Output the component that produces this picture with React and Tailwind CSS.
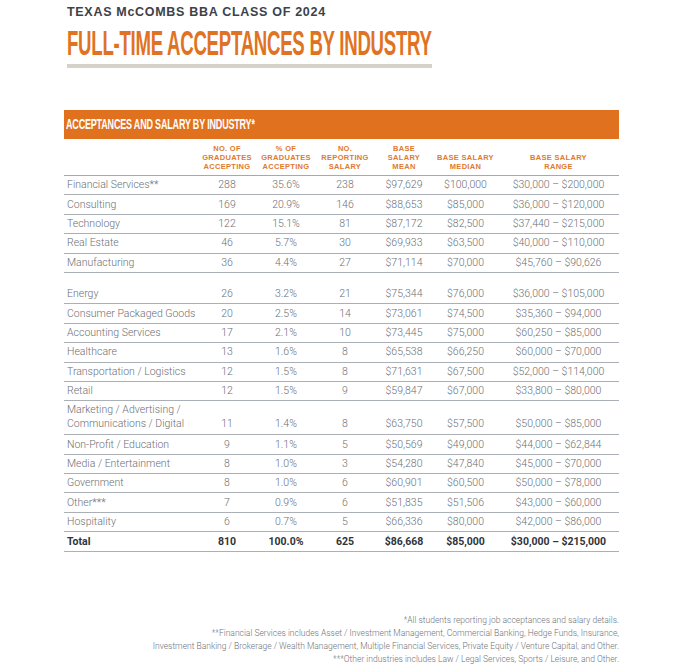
import React from 'react';

const groupOne = [
  ['Financial Services**', '288', '35.6%', '238', '$97,629', '$100,000', '$30,000 – $200,000'],
  ['Consulting', '169', '20.9%', '146', '$88,653', '$85,000', '$36,000 – $120,000'],
  ['Technology', '122', '15.1%', '81', '$87,172', '$82,500', '$37,440 – $215,000'],
  ['Real Estate', '46', '5.7%', '30', '$69,933', '$63,500', '$40,000 – $110,000'],
  ['Manufacturing', '36', '4.4%', '27', '$71,114', '$70,000', '$45,760 – $90,626'],
];

const groupTwo = [
  ['Energy', '26', '3.2%', '21', '$75,344', '$76,000', '$36,000 – $105,000'],
  ['Consumer Packaged Goods', '20', '2.5%', '14', '$73,061', '$74,500', '$35,360 – $94,000'],
  ['Accounting Services', '17', '2.1%', '10', '$73,445', '$75,000', '$60,250 – $85,000'],
  ['Healthcare', '13', '1.6%', '8', '$65,538', '$66,250', '$60,000 – $70,000'],
  ['Transportation / Logistics', '12', '1.5%', '8', '$71,631', '$67,500', '$52,000 – $114,000'],
  ['Retail', '12', '1.5%', '9', '$59,847', '$67,000', '$33,800 – $80,000'],
];

const marketing = ['11', '1.4%', '8', '$63,750', '$57,500', '$50,000 – $85,000'];

const groupThree = [
  ['Non-Profit / Education', '9', '1.1%', '5', '$50,569', '$49,000', '$44,000 – $62,844'],
  ['Media / Entertainment', '8', '1.0%', '3', '$54,280', '$47,840', '$45,000 – $70,000'],
  ['Government', '8', '1.0%', '6', '$60,901', '$60,500', '$50,000 – $78,000'],
  ['Other***', '7', '0.9%', '6', '$51,835', '$51,506', '$43,000 – $60,000'],
  ['Hospitality', '6', '0.7%', '5', '$66,336', '$80,000', '$42,000 – $86,000'],
];

const total = ['Total', '810', '100.0%', '625', '$86,668', '$85,000', '$30,000 – $215,000'];

const headers = [
  ['NO. OF', 'GRADUATES', 'ACCEPTING'],
  ['% OF', 'GRADUATES', 'ACCEPTING'],
  ['NO.', 'REPORTING', 'SALARY'],
  ['BASE', 'SALARY', 'MEAN'],
  ['BASE SALARY', 'MEDIAN'],
  ['BASE SALARY', 'RANGE'],
];

const cols = 'grid grid-cols-[133px_60px_58px_60px_58px_65px_1fr]';

const Row = ({ row, bold }) => (
  <div
    className={`${cols} h-[19.4px] items-center border-b border-[#aab0b6] ${
      bold ? 'font-bold text-[#2f343a]' : 'font-light text-[#6c7076]'
    }`}
  >
    <div className="pl-[3px] whitespace-nowrap">{row[0]}</div>
    {row.slice(1).map((v, i) => (
      <div key={i} className="text-center whitespace-nowrap">{v}</div>
    ))}
  </div>
);

export default function App() {
  return (
    <div className="w-[681px] h-[668px] bg-white overflow-hidden font-['Roboto',sans-serif]">
      <div className="ml-[64px] w-[555px] pt-[5px]">
        <div className="pl-[3px] h-[15px] leading-[15px] text-[12.5px] font-bold tracking-[0.7px] text-[#3c4248] font-['Liberation_Sans',sans-serif] whitespace-nowrap">
          TEXAS McCOMBS BBA CLASS OF 2024
        </div>
        <div className="pl-[3px] mt-[5px] h-[35px] leading-[35px] whitespace-nowrap">
          <span className="inline-block origin-left scale-x-[0.532] text-[35px] font-bold text-[#e07323] font-['Liberation_Sans',sans-serif] tracking-[-0.5px]">
            FULL-TIME ACCEPTANCES BY INDUSTRY
          </span>
        </div>
        <div className="ml-[3px] mt-[4px] w-[365px] h-[4px] bg-[#d5d3c8]" />

        <div className="mt-[42px] h-[29px] bg-[#e0711f] flex items-center pl-[2px] whitespace-nowrap">
          <span className="inline-block origin-left scale-x-[0.6] text-[15px] font-bold text-white font-['Liberation_Sans',sans-serif] tracking-[-0.3px]">
            ACCEPTANCES AND SALARY BY INDUSTRY*
          </span>
        </div>

        <div className={`${cols} h-[37px] border-b-[1.5px] border-[#a3a9af] items-end pb-[4px]`}>
          <div />
          {headers.map((h, i) => (
            <div
              key={i}
              className="text-center text-[7.5px] leading-[9px] font-bold tracking-[0.3px] text-[#e07a2e] font-['Liberation_Sans',sans-serif] whitespace-nowrap"
            >
              {h.map((line) => (
                <div key={line}>{line}</div>
              ))}
            </div>
          ))}
        </div>

        <div className="text-[10.5px]">
          {groupOne.map((r) => (
            <Row key={r[0]} row={r} />
          ))}
          <div className="h-[12px]" />
          {groupTwo.map((r) => (
            <Row key={r[0]} row={r} />
          ))}
          <div className={`${cols} h-[34px] items-end pb-[3px] border-b border-[#aab0b6] font-light text-[#6c7076] leading-[14px]`}>
            <div className="pl-[3px] whitespace-nowrap">
              <div>Marketing / Advertising /</div>
              <div>Communications / Digital</div>
            </div>
            {marketing.map((v, i) => (
              <div key={i} className="text-center whitespace-nowrap">{v}</div>
            ))}
          </div>
          {groupThree.map((r) => (
            <Row key={r[0]} row={r} />
          ))}
          <Row row={total} bold />
        </div>

        <div className="mt-[62px] text-right text-[8.5px] leading-[13px] font-light text-[#6f7378] whitespace-nowrap">
          <div>*All students reporting job acceptances and salary details.</div>
          <div>**Financial Services includes Asset / Investment Management, Commercial Banking, Hedge Funds, Insurance,</div>
          <div>Investment Banking / Brokerage / Wealth Management, Multiple Financial Services, Private Equity / Venture Capital, and Other.</div>
          <div>***Other industries includes Law / Legal Services, Sports / Leisure, and Other.</div>
        </div>
      </div>
    </div>
  );
}
